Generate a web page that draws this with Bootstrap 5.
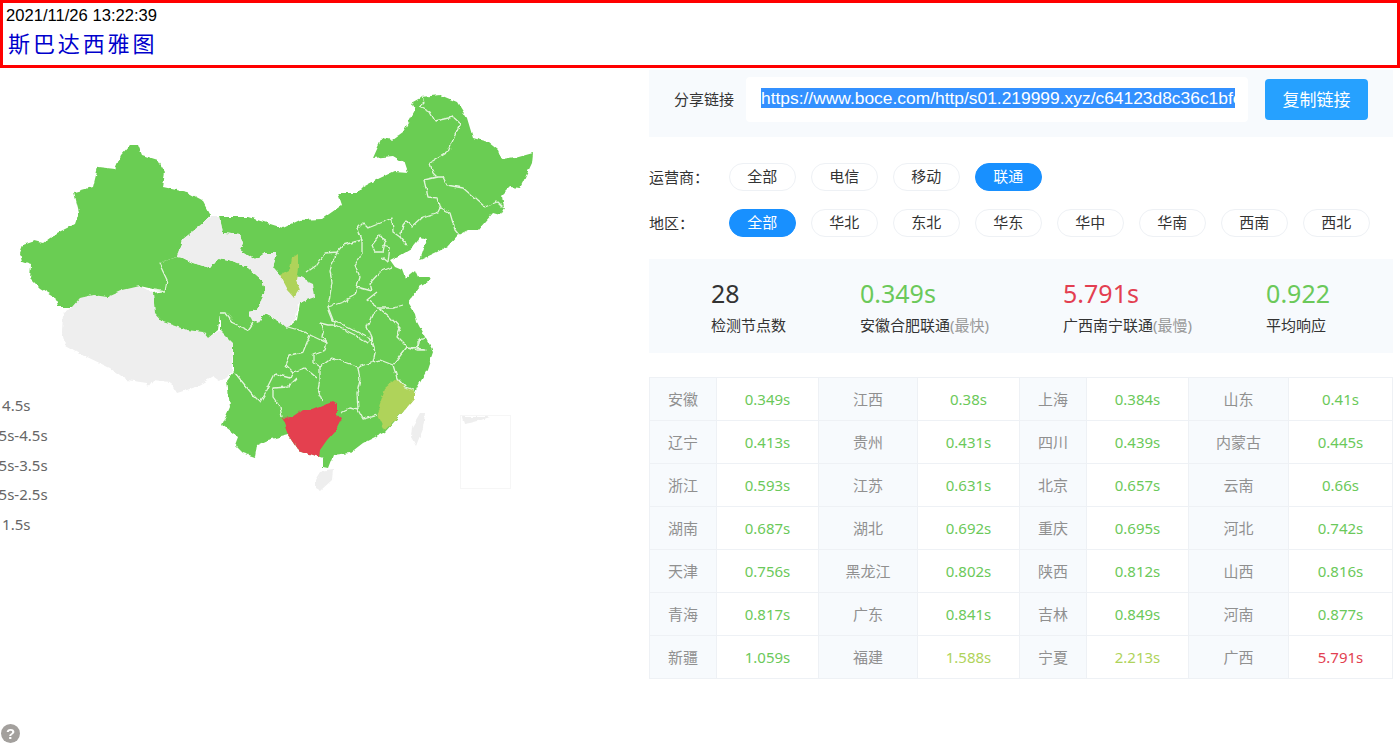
<!DOCTYPE html>
<html lang="zh-CN">
<head>
    <meta charset="UTF-8">
    <title>斯巴达西雅图</title>
    <link href="https://cdn.jsdelivr.net/npm/bootstrap@5.3.0/dist/css/bootstrap.min.css" rel="stylesheet">
    <style>
        body {
            background: #fff;
            color: #333;
            font-family: "Noto Sans", "Noto Sans CJK SC", sans-serif;
            font-size: 15px;
            overflow: hidden;
        }

        .topbox {
            height: 68px;
            border: 3px solid #f00;
            padding: 3px;
        }

        .topbox-time {
            font-family: "Liberation Sans", sans-serif;
            font-size: 16.6px;
            line-height: 19px;
            color: #000;
        }

        .topbox-city {
            font-family: "Noto Sans CJK SC", sans-serif;
            font-size: 22px;
            line-height: 32px;
            letter-spacing: 2.9px;
            color: #00c;
            margin-left: 2px;
            margin-top: 1px;
        }

        .map-col {
            width: 649px;
            flex: none;
            position: relative;
            height: 609px;
        }

        .map-col svg {
            display: block;
        }

        .legend-box {
            position: absolute;
            left: -14px;
            top: 323px;
            color: #666;
            line-height: 29.8px;
            white-space: nowrap;
        }

        .info-col {
            width: 744px;
            flex: none;
            padding-top: 2px;
        }

        .share-panel {
            height: 67px;
            background: #f7fafd;
            padding: 7px 25px 0 25px;
        }

        .share-label {
            width: 72px;
            flex: none;
            line-height: 45px;
        }

        .share-input {
            width: 502px;
            height: 45px;
            flex: none;
            background: #fff;
            border-radius: 4px;
            padding: 0 13px 0 15px;
            font-family: "Liberation Sans", sans-serif;
            font-size: 17.4px;
            line-height: 43px;
        }

        .share-text {
            overflow: hidden;
            white-space: nowrap;
        }

        .share-text span {
            background: #3390ff;
            color: #fff;
        }

        .share-btn {
            width: 103px;
            height: 41px;
            margin: 2px 0 0 17px;
            padding: 0;
            background: #26a1ff;
            border: 0;
            border-radius: 4px;
            color: #fff;
            font-size: 17px;
        }

        .filter-row {
            height: 28px;
            line-height: 28px;
        }

        .filter-name {
            width: 80px;
            flex: none;
        }

        .chip {
            width: 66.5px;
            height: 28px;
            flex: none;
            margin-right: 15.5px;
            border: 1px solid #eef1f5;
            border-radius: 14px;
            text-align: center;
            line-height: 25px;
        }

        .chip.on {
            background: #1890ff;
            border-color: #1890ff;
            color: #fff;
        }

        .filter-first {
            margin-top: 26px;
        }

        .filter-second {
            margin-top: 18px;
        }

        .stats-panel {
            height: 94px;
            margin-top: 22px;
            padding: 17px 0 0 62px;
            background: #f7fafd;
            gap: 74px;
        }

        .stat-num {
            font-size: 25px;
            line-height: 34px;
        }

        .stat-label {
            line-height: 24px;
            margin-top: 3px;
            white-space: nowrap;
        }

        .stat-label i {
            font-style: normal;
            color: #999;
        }

        .speed-table {
            width: 743px;
            margin-top: 24px;
            table-layout: fixed;
            border-collapse: collapse;
        }

        .speed-table td {
            height: 43px;
            padding: 0;
            border: 1px solid #eef1f5;
            text-align: center;
            vertical-align: middle;
        }

        .speed-table td.prov {
            background: #f7fafd;
            color: #909090;
        }

        .c1 { width: 67px; }
        .c2 { width: 102px; }
        .c3 { width: 99px; }
        .c4 { width: 102px; }
        .c5 { width: 67px; }
        .c6 { width: 102px; }
        .c7 { width: 100px; }
        .c8 { width: 104px; }

        .txt-good { color: #6bc95a; }
        .txt-mid { color: #afd35a; }
        .txt-bad { color: #e33f51; }

        .help-mark {
            position: fixed;
            left: 1px;
            top: 724px;
            width: 19px;
            height: 19px;
            border-radius: 50%;
            background: #a3a09d;
            color: #fff;
            font-family: "Liberation Sans", sans-serif;
            font-size: 15px;
            font-weight: bold;
            line-height: 19px;
            text-align: center;
        }
    </style>
</head>
<body>
    <div class="topbox">
        <div class="topbox-time">2021/11/26 13:22:39</div>
        <div class="topbox-city">斯巴达西雅图</div>
    </div>

    <div class="d-flex">
        <div class="map-col">
            <svg width="649" height="609" viewBox="0 68 649 609">
                <defs>
                    <filter id="rough" filterUnits="userSpaceOnUse" x="0" y="68" width="649" height="609">
                        <feTurbulence type="fractalNoise" baseFrequency="0.16" numOctaves="2" seed="4"/>
                        <feDisplacementMap in="SourceGraphic" scale="4" xChannelSelector="R" yChannelSelector="G"/>
                        <feGaussianBlur stdDeviation="0.35"/>
                    </filter>
                </defs>
                <g filter="url(#rough)">
                <g fill="#eee">
                    <!-- tibet -->
                    <path d="M63 313 72 307 80 298 93 295 107 297 123 290 140 286 153 293 155 313 163 322 187 330 203 332 208 338 220 330 233 343 232 372 220 382 213 377 193 388 177 393 170 382 153 380 148 387 147 383 127 380 110 368 83 355 65 345 62 332Z"/>
                    <!-- taiwan, hainan -->
                    <path d="M420 413 425 413 423 428 416 446 411 437 412 427Z"/>
                    <path d="M315 480 320 472 333 470 332 480 320 491 315 488Z"/>
                    <path d="M462 417 490 417 478 421 470 423 464 424Z"/>
                </g>

                <!-- xinjiang, qinghai, everything east -->
                <g fill="#6bcd52">
                    <path d="M20 253 23 245 35 241 43 243 57 233 75 224 79 212 74 192 93 187 98 167 115 169 121 155 130 145 138 145 142 155 158 160 165 172 163 187 187 192 202 200 210 215 203 225 192 232 182 240 177 257 159 263 167 280 165 291 153 289 140 286 123 290 107 297 93 295 80 298 72 307 58 307 55 297 40 288 30 278 31 265 22 262Z"/>
                    <path d="M159 263 177 257 183 258 193 263 210 268 218 258 230 260 247 267 262 280 265 290 258 310 248 312 252 322 250 330 237 325 227 312 220 313 218 330 208 338 203 332 187 330 163 322 155 313 153 293 165 291 167 280Z"/>
                    <path d="M220 217 248 217 267 223 283 228 300 220 322 219 342 205 338 193 357 193 363 187 380 178 395 171 408 172 405 163 393 156 373 158 382 138 392 140 403 132 415 110 411 103 422 97 440 95 457 102 467 118 473 138 488 142 498 150 502 160 515 158 533 153 532 163 525 178 520 188 510 187 502 195 504 208 500 215 493 213 478 230 468 230 458 235 447 247 437 252 420 260 427 240 420 238 412 248 400 255 390 260 395 267 402 270 405 278 415 270 418 277 430 277 428 282 418 288 408 302 415 313 417 322 425 337 433 352 427 370 417 388 413 398 403 412 385 432 363 443 350 453 333 455 328 468 323 467 323 458 298 450 288 435 268 440 257 445 255 457 243 453 235 445 238 437 222 425 230 407 227 380 233 372 233 343 220 330 220 313 227 312 237 325 250 330 248 318 263 313 277 320 287 328 297 320 300 303 300 280 280 275 273 267 277 253 265 253 255 260 240 250 243 243 240 235 223 233Z"/>
                </g>

                <!-- gansu -->
                <path fill="#eee" d="M177 257 182 240 192 232 210 217 220 217 223 233 240 235 243 243 240 250 255 260 265 253 277 253 273 267 280 275 300 277 313 283 315 297 298 303 296 318 287 329 277 320 265 313 258 323 252 320 248 312 258 310 265 290 262 280 247 267 230 260 218 258 210 268 193 263 183 258Z"/>

                <path fill="#afd35a" d="M280 275 290 270 292 258 298 254 298 268 296 280 300 290 295 298 288 290Z"/>
                <path fill="#afd35a" d="M397 378 385 388 377 413 385 430 403 412 415 398 415 390 405 387Z"/>
                <path fill="#e43f50" d="M282 418 292 417 302 410 312 410 332 402 337 405 337 415 342 418 336 430 327 440 320 450 319 457 298 450 288 435Z"/>

                <g fill="none" stroke="#e2f5dc" stroke-width="1.3" stroke-linejoin="round">
                    <path d="M159 263 167 280 165 291 153 289"/>
                    <path d="M220 313 225 313 233 323 248 330 253 323"/>
                    <!-- north east -->
                    <path d="M422 97 424 103 420 107 430 112 435 121 453 117 460 123 453 140 448 152 430 163 433 173 437 177 443 177 447 185 463 188 477 200 485 207 497 202 503 208"/>
                    <path d="M437 177 424 180 428 197 437 198 440 208 450 213 455 230 459 235"/>
                    <path d="M440 208 438 212 423 217 412 227 407 220 403 225 400 237 407 245"/>
                    <path d="M400 237 393 232 392 218 383 222 368 228 363 223 358 228 362 240 343 245 337 252 325 253 317 265 307 272"/>
                    <path d="M372 245 380 235 385 242 383 252 375 252Z"/>
                    <path d="M383 245 390 247 388 262 382 257"/>
                    <!-- shanxi, shaanxi, hebei -->
                    <path d="M362 240 362 253 355 265 360 277 357 287 372 291 370 283 380 272 392 267"/>
                    <path d="M337 252 330 270 332 283 328 307 335 325 355 335 367 343 372 338"/>
                    <path d="M328 307 343 302 355 295 357 287"/>
                    <!-- henan, shandong, jiangsu -->
                    <path d="M377 292 367 300 378 308 393 308 403 305"/>
                    <path d="M378 310 372 315 367 327 372 338 373 345 375 353"/>
                    <path d="M380 309 390 317 400 328 397 337 407 347 418 348 420 338"/>
                    <path d="M425 338 418 340 418 348 425 350 417 350 407 347 393 365"/>
                    <!-- south centre -->
                    <path d="M373 362 380 360 393 365 397 378 405 387 415 390"/>
                    <path d="M320 323 328 325 335 325"/>
                    <path d="M320 323 323 332 322 337 327 343 325 350 313 355 313 363 320 367 332 358 348 363 358 367 373 362 375 353 372 340 348 327 332 320 328 310"/>
                    <path d="M358 367 360 380 357 393 358 410 363 419 377 415"/>
                    <path d="M320 367 320 380 318 390 322 400"/>
                    <path d="M340 413 350 408 358 410"/>
                    <path d="M288 327 305 332 310 335 303 352 290 355 286 365 293 372 305 368 317 378"/>
                    <path d="M310 335 327 343"/>
                    <!-- guizhou, sichuan, yunnan -->
                    <path d="M235 373 253 395 260 402 267 390 275 374 290 378 293 372"/>
                    <path d="M297 378 288 387 273 388 273 397 280 407 282 417"/>
                </g>
                </g>
                <rect x="460.5" y="415.5" width="50" height="73" fill="none" stroke="#f6f6f6"/>
            </svg>
            <div class="legend-box">
                <div>&gt;&ensp;4.5s</div>
                <div>3.5s-4.5s</div>
                <div>2.5s-3.5s</div>
                <div>1.5s-2.5s</div>
                <div>&lt;&ensp;1.5s</div>
            </div>
        </div>

        <div class="info-col">
            <div class="share-panel d-flex">
                <div class="share-label">分享链接</div>
                <div class="share-input"><div class="share-text"><span>https://www.boce.com/http/s01.219999.xyz/c64123d8c36c1bfc</span></div></div>
                <button class="share-btn btn" type="button">复制链接</button>
            </div>

            <div class="filter-row filter-first d-flex">
                <div class="filter-name">运营商：</div>
                <div class="chip">全部</div>
                <div class="chip">电信</div>
                <div class="chip">移动</div>
                <div class="chip on">联通</div>
            </div>
            <div class="filter-row filter-second d-flex">
                <div class="filter-name">地区：</div>
                <div class="chip on">全部</div>
                <div class="chip">华北</div>
                <div class="chip">东北</div>
                <div class="chip">华东</div>
                <div class="chip">华中</div>
                <div class="chip">华南</div>
                <div class="chip">西南</div>
                <div class="chip">西北</div>
            </div>

            <div class="stats-panel d-flex">
                <div>
                    <div class="stat-num">28</div>
                    <div class="stat-label">检测节点数</div>
                </div>
                <div>
                    <div class="stat-num txt-good">0.349s</div>
                    <div class="stat-label">安徽合肥联通<i>(最快)</i></div>
                </div>
                <div>
                    <div class="stat-num txt-bad">5.791s</div>
                    <div class="stat-label">广西南宁联通<i>(最慢)</i></div>
                </div>
                <div>
                    <div class="stat-num txt-good">0.922</div>
                    <div class="stat-label">平均响应</div>
                </div>
            </div>

            <table class="speed-table">
                <colgroup>
                    <col class="c1"><col class="c2"><col class="c3"><col class="c4">
                    <col class="c5"><col class="c6"><col class="c7"><col class="c8">
                </colgroup>
                <tbody id="speed-body"></tbody>
            </table>
        </div>
    </div>

    <div class="help-mark">?</div>

    <script src="https://cdn.jsdelivr.net/npm/bootstrap@5.3.0/dist/js/bootstrap.bundle.min.js"></script>
    <script>
        const speeds = [
            ["安徽", 0.349], ["江西", 0.38], ["上海", 0.384], ["山东", 0.41],
            ["辽宁", 0.413], ["贵州", 0.431], ["四川", 0.439], ["内蒙古", 0.445],
            ["浙江", 0.593], ["江苏", 0.631], ["北京", 0.657], ["云南", 0.66],
            ["湖南", 0.687], ["湖北", 0.692], ["重庆", 0.695], ["河北", 0.742],
            ["天津", 0.756], ["黑龙江", 0.802], ["陕西", 0.812], ["山西", 0.816],
            ["青海", 0.817], ["广东", 0.841], ["吉林", 0.849], ["河南", 0.877],
            ["新疆", 1.059], ["福建", 1.588], ["宁夏", 2.213], ["广西", 5.791]
        ];

        function speedClass(s) {
            if (s > 4.5) return "txt-bad";
            if (s > 1.5) return "txt-mid";
            return "txt-good";
        }

        const body = document.getElementById("speed-body");
        for (let i = 0; i < speeds.length; i += 4) {
            let row = "<tr>";
            speeds.slice(i, i + 4).forEach(([name, s]) => {
                row += `<td class="prov">${name}</td><td class="${speedClass(s)}">${s}s</td>`;
            });
            body.innerHTML += row + "</tr>";
        }
    </script>
</body>
</html>
